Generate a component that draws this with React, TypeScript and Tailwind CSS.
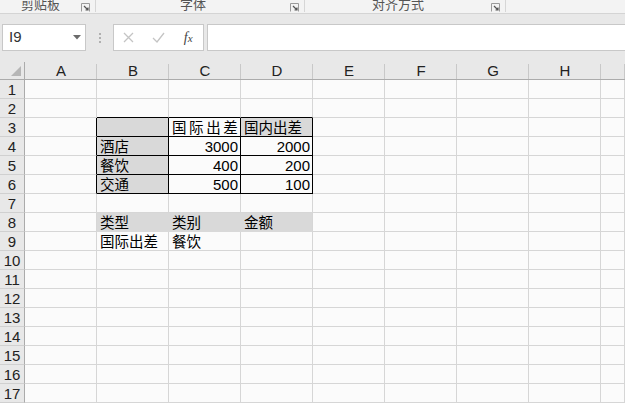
import React from "react";

const COLS = ["A", "B", "C", "D", "E", "F", "G", "H", ""];
const ROWS = Array.from({ length: 17 }, (_, i) => i + 1);

type CellData = { text: string; num?: boolean; wide?: boolean };
const DATA: Record<string, CellData> = {
  C3: { text: "国际出差", wide: true },
  D3: { text: "国内出差" },
  B4: { text: "酒店" },
  C4: { text: "3000", num: true },
  D4: { text: "2000", num: true },
  B5: { text: "餐饮" },
  C5: { text: "400", num: true },
  D5: { text: "200", num: true },
  B6: { text: "交通" },
  C6: { text: "500", num: true },
  D6: { text: "100", num: true },
  B8: { text: "类型" },
  C8: { text: "类别" },
  D8: { text: "金额" },
  B9: { text: "国际出差" },
  C9: { text: "餐饮" },
};

function cellClass(col: string, row: number): string {
  const inTable = ["B", "C", "D"].includes(col) && row >= 3 && row <= 6;
  const grayFill = ["B3", "D3", "B4", "B5", "B6"].includes(col + row);
  const band = ["B", "C", "D"].includes(col) && row === 8;
  if (inTable) {
    return (
      "border-r border-b border-black " +
      (grayFill ? "bg-[#d9d9d9]" : "bg-[#fbfbfb]")
    );
  }
  if (band) {
    if (col === "D") return "border-r border-b border-r-[#d6d6d6] border-b-[#d9d9d9] bg-[#d9d9d9]";
    return "border-r border-b border-[#d9d9d9] bg-[#d9d9d9]";
  }
  if (["B", "C", "D"].includes(col) && row === 2) {
    return "border-r border-b border-r-[#d6d6d6] border-b-black bg-[#fbfbfb]";
  }
  if (col === "A" && row >= 3 && row <= 6) {
    return "border-r border-b border-r-black border-b-[#d6d6d6] bg-[#fbfbfb]";
  }
  return "border-r border-b border-[#d6d6d6] bg-[#fbfbfb]";
}

function Launcher() {
  return (
    <svg width="9" height="9" viewBox="0 0 9 9" className="shrink-0">
      <path d="M0.5 0.5 H8.5 V8.5 M0.5 0.5 V8.5" stroke="#9a9a9a" strokeWidth="1" fill="none" />
      <path d="M3 3 L7 7 M4.5 7 H7 V4.5" stroke="#555" strokeWidth="1.2" fill="none" />
    </svg>
  );
}

export default function App() {
  return (
    <div
      className="w-[625px] h-[403px] overflow-hidden flex flex-col bg-[#e8e8e8]"
      style={{ fontFamily: '"Liberation Sans", "Noto Sans CJK SC", sans-serif' }}
    >
      {/* Ribbon group labels */}
      <div className="h-[14px] flex bg-[#f3f3f3] border-b border-[#d4d4d4] text-[13px] text-[#555] overflow-hidden">
        <div className="w-[96px] flex items-start border-r border-[#d6d6d6] h-[12px]">
          <div className="flex-1 text-center leading-[13px] mt-[-3px]" style={{ fontFamily: '"Noto Sans CJK SC", sans-serif' }}>剪贴板</div>
          <div className="mt-[3px] mr-[5px]"><Launcher /></div>
        </div>
        <div className="w-[209px] flex items-start border-r border-[#d6d6d6] h-[12px]">
          <div className="flex-1 text-center leading-[13px] mt-[-3px]" style={{ fontFamily: '"Noto Sans CJK SC", sans-serif' }}>字体</div>
          <div className="mt-[3px] mr-[5px]"><Launcher /></div>
        </div>
        <div className="w-[201px] flex items-start border-r border-[#d6d6d6] h-[12px]">
          <div className="flex-1 text-center leading-[13px] mt-[-3px]" style={{ fontFamily: '"Noto Sans CJK SC", sans-serif' }}>对齐方式</div>
          <div className="mt-[3px] mr-[5px]"><Launcher /></div>
        </div>
        <div className="flex-1" />
      </div>

      {/* Formula bar area */}
      <div className="h-[48px] flex items-start pt-[10px] bg-[#e8e8e8]">
        <div className="ml-[2px] w-[84px] h-[27px] bg-white border border-[#c8c8c8] flex items-center justify-between pl-[6px] pr-[4px]">
          <span className="text-[15px] text-[#333]">I9</span>
          <svg width="8" height="5" viewBox="0 0 8 5"><path d="M0 0 H8 L4 4.5 Z" fill="#6b6b6b" /></svg>
        </div>
        <div className="w-[27px] h-[27px] flex flex-col items-center justify-center gap-[2px]">
          <span className="w-[2px] h-[2px] bg-[#b0b0b0]" />
          <span className="w-[2px] h-[2px] bg-[#b0b0b0]" />
          <span className="w-[2px] h-[2px] bg-[#b0b0b0]" />
        </div>
        <div className="w-[91px] h-[27px] bg-white border border-[#c8c8c8] flex items-center">
          <div className="w-[30px] flex justify-center">
            <svg width="11" height="11" viewBox="0 0 11 11"><path d="M1 1 L10 10 M10 1 L1 10" stroke="#c4c4c4" strokeWidth="1.3" /></svg>
          </div>
          <div className="w-[30px] flex justify-center">
            <svg width="13" height="11" viewBox="0 0 13 11"><path d="M1 6 L5 10 L12 1" stroke="#c4c4c4" strokeWidth="1.3" fill="none" /></svg>
          </div>
          <div className="w-[30px] flex justify-center">
            <span className="italic text-[14px] text-[#444]" style={{ fontFamily: '"Liberation Serif", serif' }}>f<span className="text-[11px]">x</span></span>
          </div>
        </div>
        <div className="ml-[3px] flex-1 h-[27px] bg-white border border-[#c8c8c8] border-r-0" />
      </div>

      {/* Sheet */}
      <div
        className="grid flex-1 bg-[#fbfbfb]"
        style={{ gridTemplateColumns: "25px repeat(8, 72px) 1fr", gridTemplateRows: "18px repeat(17, 19px)" }}
      >
        <div className="bg-[#e8e8e8] border-r border-b border-[#ababab] flex items-end justify-end pr-[3px] pb-[3px]">
          <svg width="10" height="10" viewBox="0 0 10 10"><path d="M10 0 V10 H0 Z" fill="#b6b6b6" /></svg>
        </div>
        {COLS.map((c, i) => (
          <div
            key={"h" + i}
            className="bg-[#e8e8e8] border-b border-[#ababab] border-r-0 flex items-center justify-center text-[15px] text-[#222] leading-none relative"
          >
            {c}
            <span className="absolute right-0 top-[2px] bottom-0 w-px bg-[#c8c8c8]" />
          </div>
        ))}
        {ROWS.map((r) => (
          <React.Fragment key={r}>
            <div className="bg-[#e8e8e8] border-r border-b border-r-[#ababab] border-b-[#d0d0d0] flex items-center justify-center text-[15px] text-[#222] leading-none">
              {r}
            </div>
            {COLS.map((c) => {
              const col = c || "I";
              const d = DATA[col + r];
              return (
                <div
                  key={col + r}
                  className={
                    cellClass(col, r) +
                    " flex items-center overflow-visible whitespace-nowrap text-[15px] text-black leading-none " +
                    (d?.num ? "justify-end pr-[2px]" : "justify-start pl-[3px]")
                  }
                >
                  {d ? (
                    <span
                      className={d.wide ? "tracking-[2.6px]" : ""}
                      style={d.num ? undefined : { fontFamily: '"Noto Sans CJK SC", sans-serif', fontSize: "14.5px" }}
                    >
                      {d.text}
                    </span>
                  ) : null}
                </div>
              );
            })}
          </React.Fragment>
        ))}
      </div>
    </div>
  );
}
